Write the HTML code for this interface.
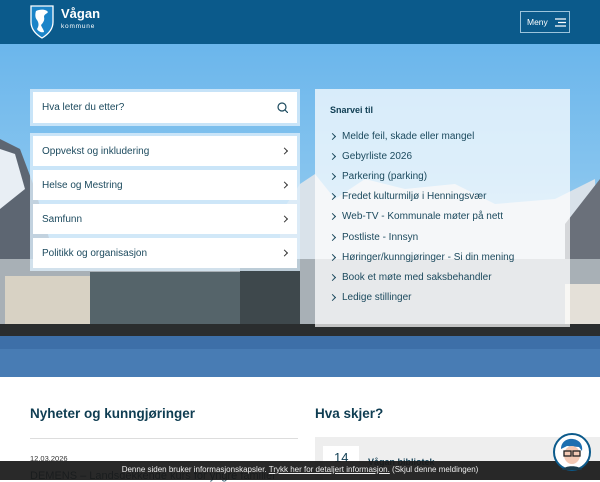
<!DOCTYPE html>
<html><head><meta charset="utf-8"><style>
*{margin:0;padding:0;box-sizing:border-box}
body{width:600px;height:480px;overflow:hidden;font-family:"Liberation Sans",sans-serif;background:#fff;position:relative}
.hdr{position:absolute;left:0;top:0;width:600px;height:44px;background:#0b5a8b}
.hero{position:absolute;left:0;top:44px;width:600px;height:333px;background:linear-gradient(#6bb6ec 0%,#86c4ee 40%,#b9d8ee 70%,#c8dcec 100%);overflow:hidden}
.box{position:absolute;background:#fff;color:#1c4a5e;font-size:10px}
.chev{position:absolute;right:10px;top:50%;width:5px;height:5px;border-right:1.2px solid #333;border-top:1.2px solid #333;transform:translateY(-50%) rotate(45deg)}
.sn{position:absolute;left:315px;top:89px;width:255px;height:238px;background:rgba(255,255,255,.72)}
.sn li{list-style:none;position:absolute;left:14px;font-size:10px;color:#1c4a5e;line-height:12px}
.sn li:before{content:"";position:absolute;left:1px;top:3px;width:4px;height:4px;border-right:1.2px solid #1c4a5e;border-top:1.2px solid #1c4a5e;transform:rotate(45deg)}
.sn li span{margin-left:13px}
h2{position:absolute;font-size:13.5px;color:#0f3d52;font-weight:bold}
</style></head><body>
<div class="hdr">
<svg style="position:absolute;left:29px;top:5px" width="26" height="34" viewBox="0 0 26 34"><path d="M2 1h22v16c0 8-6 13-11 16C8 30 2 25 2 17z" fill="#1b84c8" stroke="#fff" stroke-width="1.3"/><path d="M7 6c4-2 10-2 12 1-1 2-4 2-4 5 1 3-1 6-3 8 1 3 3 5 3 7-3 1-6-1-7-3 2-3 2-6 0-9-2-2-2-6-1-9z" fill="#fff"/></svg>
<div style="position:absolute;left:61px;top:6px;color:#fff;font-weight:bold;font-size:13px">Vågan</div>
<div style="position:absolute;left:61px;top:23px;color:#fff;font-size:6.5px;letter-spacing:.8px">kommune</div>
<div style="position:absolute;left:520px;top:11px;width:50px;height:22px;border:1px solid #9cc4dc;color:#fff;font-size:8.5px;padding:5px 0 0 6px">Meny
<svg style="position:absolute;left:34px;top:6px" width="11" height="9"><path d="M0 1h11M3 4.5h8M0 8h11" stroke="#fff" stroke-width="1.2"/></svg></div>
</div>
<div class="hero">
<svg width="600" height="333" style="position:absolute;left:0;top:0">
<path d="M0 95l20 10 15 40 20 70 0 113H0z" fill="#5d6672"/>
<path d="M0 105l15 5 10 35-25 20z" fill="#e8eef4"/>
<path d="M280 170l20-30 15-10 20 25 30-20 40 10 50-5 40 20 60-5 40-20 5 150H280z" fill="#d9e2ea"/>
<path d="M565 180l35-45v110h-35z" fill="#6a707a"/>
<path d="M0 215h600v75H0z" fill="#a8b0b6"/>
<path d="M90 228h160v55H90z" fill="#55646a"/>
<path d="M5 232h85v50H5z" fill="#d8d2c4"/>
<path d="M240 215h60v70h-60z" fill="#3e484c"/>
<path d="M565 240h35v40h-35z" fill="#e4e0d8"/>
<path d="M0 280h600v12H0z" fill="#2a2d2e"/>
<path d="M0 292h600v41H0z" fill="#3d6fa8"/>
<path d="M0 305h600v28H0z" fill="#5085bd" opacity=".6"/>
</svg>
</div>
<div style="position:absolute;left:30px;top:89px;width:270px;height:37px;background:rgba(220,238,250,.8)"></div>
<div class="box" style="left:33px;top:92px;width:264px;height:31px;padding:10px 0 0 9px">Hva leter du etter?
<svg style="position:absolute;right:9px;top:10px" width="11" height="11"><circle cx="5" cy="5" r="4" fill="none" stroke="#1c4a5e" stroke-width="1.2"/><path d="M8 8l3 3" stroke="#1c4a5e" stroke-width="1.2"/></svg></div>
<div style="position:absolute;left:30px;top:133px;width:270px;height:138px;background:rgba(220,238,250,.8)"></div>
<div class="box" style="left:33px;top:136px;width:264px;height:30px;padding:10px 0 0 9px">Oppvekst og inkludering<i class="chev"></i></div>
<div class="box" style="left:33px;top:170px;width:264px;height:30px;padding:10px 0 0 9px">Helse og Mestring<i class="chev"></i></div>
<div class="box" style="left:33px;top:204px;width:264px;height:30px;padding:10px 0 0 9px">Samfunn<i class="chev"></i></div>
<div class="box" style="left:33px;top:238px;width:264px;height:30px;padding:10px 0 0 9px">Politikk og organisasjon<i class="chev"></i></div>
<div class="sn">
<div style="position:absolute;left:15px;top:16px;font-size:9px;font-weight:bold;color:#0f3d52">Snarvei til</div>
<ul>
<li style="top:42px"><span>Melde feil, skade eller mangel</span></li>
<li style="top:62px"><span>Gebyrliste 2026</span></li>
<li style="top:82px"><span>Parkering (parking)</span></li>
<li style="top:102px"><span>Fredet kulturmiljø i Henningsvær</span></li>
<li style="top:122px"><span>Web-TV - Kommunale møter på nett</span></li>
<li style="top:143px"><span>Postliste - Innsyn</span></li>
<li style="top:163px"><span>Høringer/kunngjøringer - Si din mening</span></li>
<li style="top:183px"><span>Book et møte med saksbehandler</span></li>
<li style="top:203px"><span>Ledige stillinger</span></li>
</ul></div>
<h2 style="left:30px;top:406px">Nyheter og kunngjøringer</h2>
<h2 style="left:315px;top:406px">Hva skjer?</h2>
<div style="position:absolute;left:30px;top:438px;width:268px;height:1px;background:#ddd"></div>
<div style="position:absolute;left:30px;top:454px;font-size:7.5px;color:#333">12.03.2026</div>
<div style="position:absolute;left:30px;top:470px;font-size:11px;color:#1c4a5e">DEMENS – Landsdekkende kurs for yngre familier</div>
<div style="position:absolute;left:315px;top:437px;width:285px;height:43px;background:#eee"></div>
<div style="position:absolute;left:323px;top:446px;width:36px;height:34px;background:#fff;font-size:13px;color:#0f3d52;padding:4px 0 0 11px">14</div>
<div style="position:absolute;left:368px;top:457px;font-size:9px;font-weight:bold;color:#0f3d52">Vågan bibliotek</div>
<div style="position:absolute;left:0;top:461px;width:600px;height:19px;background:rgba(25,25,25,.93);color:#eee;font-size:8px;text-align:center;padding-top:4px">Denne siden bruker informasjonskapsler. <u>Trykk her for detaljert informasjon.</u> (Skjul denne meldingen)</div>
<svg style="position:absolute;left:553px;top:433px" width="38" height="38"><circle cx="19" cy="19" r="18" fill="#fff" stroke="#0b5a8b" stroke-width="2"/><path d="M8 16c0-8 7-11 12-10 7 1 10 6 9 12l-3-4-12-1z" fill="#1d6fb0"/><ellipse cx="19" cy="22" rx="8" ry="9" fill="#f3c9b4"/><rect x="11" y="18" width="7" height="5" fill="none" stroke="#222" stroke-width="1.3"/><rect x="20" y="18" width="7" height="5" fill="none" stroke="#222" stroke-width="1.3"/><path d="M9 37c2-5 18-5 20 0z" fill="#1b3a4a"/></svg>
</body></html>
